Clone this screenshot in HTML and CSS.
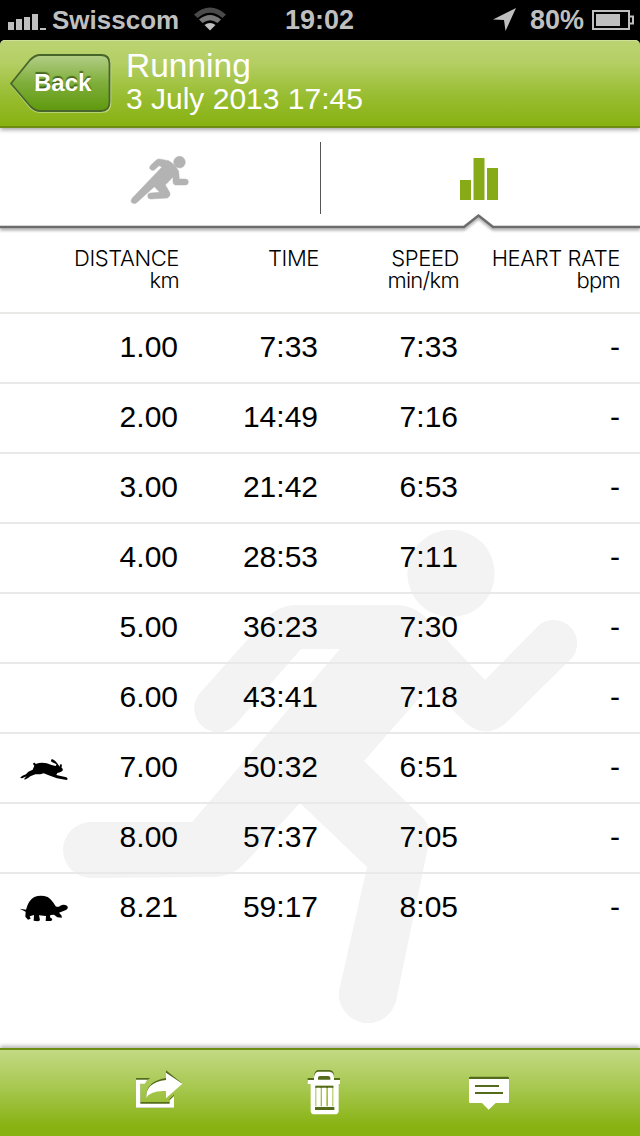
FILE: index.html
```html
<!DOCTYPE html>
<html>
<head>
	<meta charset="utf-8">
	<title>Running</title>
	<link rel="stylesheet" href="styles.css">
</head>
<body>
	<div class="status">
		<svg class="signal" width="40" height="18" viewBox="0 0 40 18">
			<path d="M0 10h6v8H0zM8 7h6v11H8zM16 5h6v13h-6zM24 2h6v16h-6zM32 16h6v2h-6z"/>
		</svg>
		<span class="carrier">Swisscom</span>
		<svg class="wifi" width="32" height="24" viewBox="0 0 32 24">
			<path class="dim" d="M0 7.500Q16-6.500 32 7.500L28.500 11Q16 .5 3.500 11Z"/>
			<path class="mid" d="M5 12.500Q16 3.500 27 12.500L23.500 16Q16 10.500 8.500 16Z"/>
			<path d="M10.500 18Q16 14 21.500 18L16 23.500Z"/>
		</svg>
		<span class="clock">19:02</span>
		<svg class="location" width="24" height="24" viewBox="0 0 24 24">
			<path d="M23 0L12.500 23L11 12L0 11.500Z"/>
		</svg>
		<span class="percent">80%</span>
		<svg class="battery" width="42" height="20" viewBox="0 0 42 20">
			<path class="outline" d="M1 1h36v18H1zM38 6.500h3v7h-3"/>
			<path d="M4 4h24v12H4z"/>
		</svg>
	</div>

	<div class="header_wrap">
		<div class="header">
			<a class="back">
				<svg width="102" height="60" viewBox="0 0 102 60">
					<defs>
						<linearGradient id="back_fill" x1="0" y1="0" x2="0" y2="1">
							<stop offset="0" stop-color="#b3ce87"/>
							<stop offset=".5" stop-color="#7fae3b"/>
							<stop offset="1" stop-color="#5f990d"/>
						</linearGradient>
					</defs>
					<path class="back_glow" d="M1.500 31L20.500 7Q25 2.500 30 2.500H92Q100.500 2.500 100.500 11V49Q100.500 58 92 58H30Q25 58 20.500 54Z"/>
					<path class="back_shape" d="M1 29.500L20 6Q25 1 30 1H91Q99.500 1 99.500 9.500V48Q99.500 57 91 57H30Q25 57 20 52Z"/>
				</svg>
				<span>Back</span>
			</a>
			<div class="heading">
				<h1>Running</h1>
				<p>3 July 2013 17:45</p>
			</div>
		</div>
	</div>

	<div class="tabs">
		<div class="tab">
			<svg class="tab_runner" width="100" height="80" viewBox="0 0 300 240">
				<circle cx="208.500" cy="66.500" r="17.500"/>
				<path d="M148 57L176 62Q193 71 206 93L208 117L226 117A9 9 0 0 1 226 135L196 135Q189 134 189 126L189 111L166 135L180 159Q182 169 172 174L122 177A9 9 0 0 1 122 159L149 157L133 140L80 188Q72 194 64 187Q61 180 67 174L156 81L147 77L133 90Q123 94 119 85Q118 80 123 75L139 60Q143 57 148 57Z"/>
			</svg>
		</div>
		<div class="tab">
			<svg class="tab_chart" width="38" height="44" viewBox="0 0 38 44">
				<path d="M0 22h11v20H0zM13.500 0h11v42h-11zM27 10h11v32H27z"/>
			</svg>
		</div>
		<svg class="tab_line" width="640" height="24" viewBox="0 0 640 24">
			<path d="M-5 14H464L478.500 2.500L493 14H645"/>
		</svg>
	</div>

	<div class="laps">
		<svg class="watermark" width="640" height="820" viewBox="0 228 640 820">
			<circle cx="451" cy="573.500" r="43.700"/>
			<path d="M296 605H396Q414 605 427 619L485 680L539 625A23.500 23.500 0 0 1 572 658L506 723Q485 740 466 723L429 687L364 761L424 819Q431 827 429 842L396 1001A29 29 0 0 1 339 991L367 867L300 803L246 862Q232 877 214 877L91 878A28 28 0 0 1 91 822H192L340 649H301L236 724A23.500 23.500 0 0 1 200 693L265 620Q278 605 296 605Z"/>
		</svg>
		<table>
			<thead>
				<tr>
					<th class="icon"></th>
					<th class="distance"><div>DISTANCE</div><div>km</div></th>
					<th class="time"><div>TIME</div></th>
					<th class="speed"><div>SPEED</div><div>min/km</div></th>
					<th class="heart"><div>HEART RATE</div><div>bpm</div></th>
				</tr>
			</thead>
			<tbody>
				<tr><td></td><td>1.00</td><td>7:33</td><td>7:33</td><td>-</td></tr>
				<tr><td></td><td>2.00</td><td>14:49</td><td>7:16</td><td>-</td></tr>
				<tr><td></td><td>3.00</td><td>21:42</td><td>6:53</td><td>-</td></tr>
				<tr><td></td><td>4.00</td><td>28:53</td><td>7:11</td><td>-</td></tr>
				<tr><td></td><td>5.00</td><td>36:23</td><td>7:30</td><td>-</td></tr>
				<tr><td></td><td>6.00</td><td>43:41</td><td>7:18</td><td>-</td></tr>
				<tr>
					<td>
						<svg width="70" height="40" viewBox="0 0 210 120">
							<path d="M31 93Q31 89 48 82L55 74L68 68L73 56Q68 52 70 48Q75 45 77 51Q94 44 110 49Q126 56 137 57Q141 54 138 51L124 44Q121 36 128 37Q138 42 147 56L149 59Q149 50 154 51Q157 58 154 61Q161 67 157 72Q151 76 142 78L139 84L169 91Q176 96 170 99L141 94L120 86L101 79L91 82L76 82L61 88Q48 98 44 98Q40 96 50 88L36 94Z"/>
						</svg>
					</td>
					<td>7.00</td><td>50:32</td><td>6:51</td><td>-</td>
				</tr>
				<tr><td></td><td>8.00</td><td>57:37</td><td>7:05</td><td>-</td></tr>
				<tr>
					<td>
						<svg width="70" height="45" viewBox="0 0 210 135">
							<path d="M29 68L48 71Q55 43 73 33Q92 26 113 33Q125 40 137 61Q144 65 151 59Q161 53 171 59Q177 66 168 72L147 80L154 88L156 95L142 94L132 86L121 87L120 94L127 99L124 105L107 105L108 90L87 88L90 103L84 106L71 104L72 87L59 91L62 98L54 101L46 92L47 77Z"/>
						</svg>
					</td>
					<td>8.21</td><td>59:17</td><td>8:05</td><td>-</td>
				</tr>
			</tbody>
		</table>
	</div>

	<div class="toolbar">
		<a>
			<svg width="80" height="86" viewBox="0 0 240 258">
				<path class="under" d="M48 84H91L78 92H61V156H149V146L162 134V174H48Z"/>
				<path class="under" d="M138 61L185 99L138 142V122Q94 118 79 142Q76 94 138 84Z"/>
				<path d="M48 89H82L74 101H61V161H149V151L162 138V173H48Z"/>
				<path d="M138 68L187 101L138 145V123Q94 120 79 143Q76 98 138 90Z"/>
			</svg>
		</a>
		<a>
			<svg width="70" height="60" viewBox="0 0 210 180">
				<path class="under" d="M53 54H72V47Q74 30 86 30H118Q132 31 132 47V54H150V67H53Z"/>
				<path d="M53 60H72V52Q74 35 86 35H118Q131 36 132 52V60H150V72H146V152Q146 163 134 163H74Q62 163 62 152V72H53ZM84 59H121V53Q120 48 115 48H90Q84 48 84 53ZM76 77V139H130V77Z" fill-rule="evenodd"/>
				<path class="under" d="M76 77H130V84H76ZM75 141H133V150H75Z"/>
				<path d="M79 83h13v57H79zM96 83h13v57H96zM114 83h13v57h-13z"/>
			</svg>
		</a>
		<a>
			<svg width="70" height="60" viewBox="0 0 210 180">
				<path class="under" d="M42 54Q42 50 46 50H158Q162 50 162 54V66H42Z"/>
				<path d="M42 57H162V125Q162 129 158 129H122L101 149L81 129H46Q42 129 42 125Z"/>
				<path class="under" d="M60 75h72v6H60zM60 96h84v6H60z"/>
			</svg>
		</a>
	</div>
</body>
</html>
```
FILE: styles.css
```css
html,body,div,h1,p,table,thead,tbody,tr,th,td{border:0;margin:0;padding:0}
body { display: flex; flex-direction: column; width: 640px; height: 1136px; overflow: hidden; background: #fff; font-family: "Liberation Sans", Arial, sans-serif; color: #000; }
svg { display: block; }

/* Status bar */

.status { display: flex; align-items: center; height: 40px; background: #000; color: #bfbfbf; font-size: 26px; font-weight: bold; line-height: 40px; }
.status svg { fill: #bfbfbf; flex: none; }
.signal { margin: 2px 4px 0 8px; }
.carrier { width: 127px; }
.wifi { margin: 0 0 2px 15px; }
.wifi .dim { fill: #4a4a4a; }
.wifi .mid { fill: #777; }
.clock { margin-left: 59px; width: 70px; font-size: 27px; }
.location { margin-left: 138px; }
.percent { margin-left: 13px; width: 56px; font-size: 27px; }
.battery { margin-left: 6px; }
.battery .outline { fill: none; stroke: #bfbfbf; stroke-width: 2; }

/* Header */

.header_wrap { position: relative; z-index: 1; background: linear-gradient(#000 10px, transparent 10px); }
.header { display: flex; box-sizing: border-box; height: 88px; padding: 14px 0 0 10px; border-bottom: 2px solid #6c8c12; border-radius: 5px 5px 0 0; background: linear-gradient(#bbd472, #b5cf66 25%, #98bd31 65%, #87b211); box-shadow: inset 0 1px 0 #cfe09b, 0 2px 4px rgba(0,0,0,.35); color: #fff; }
.back { position: relative; width: 100px; height: 60px; }
.back span { position: absolute; left: 24px; top: 15px; font-size: 24px; line-height: 28px; font-weight: bold; text-shadow: 0 -2px 1px rgba(40,70,10,.7); }
.back_shape { fill: url(#back_fill); stroke: #49662a; stroke-width: 1.8; }
.back_glow { fill: none; stroke: #c4da8c; stroke-width: 1.5; }
.heading { margin-left: 16px; }
.heading h1 { font-size: 33.500px; line-height: 34px; margin-top: -5px; font-weight: normal; }
.heading p { font-size: 30px; line-height: 32px; }

/* Tabs */

.tabs { display: flex; position: relative; height: 100px; }
.tab { flex: 1; }
.tab + .tab { background: linear-gradient(#555, #555) 0 14px / 1px 72px no-repeat; }
.tab_runner { margin: 12px 0 0 110px; fill: #b3b3b3; stroke: #b3b3b3; stroke-width: 1.5; }
.tab_chart { margin: 30px 0 0 140px; fill: #86ab17; }
.tab_line { position: absolute; left: 0; top: 85px; fill: none; stroke: #6c6c6c; stroke-width: 2.500; filter: drop-shadow(0 2px 1.5px rgba(0,0,0,.4)); }

/* Laps */

.laps { position: relative; height: 820px; }
.watermark { position: absolute; left: 0; top: 0; fill: #f3f3f3; z-index: -1; }
table { width: 640px; table-layout: fixed; border-spacing: 0; }
th { box-sizing: border-box; height: 86px; padding-top: 19px; border-bottom: 2px solid #e9e9e7; font-family: Inter, "Liberation Sans", sans-serif; font-size: 22px; line-height: 22px; font-weight: 300; letter-spacing: -.4px; vertical-align: top; text-align: right; white-space: nowrap; }
th div + div { letter-spacing: -.7px; }
td { box-sizing: border-box; height: 70px; padding: 0 1px 2px 0; border-bottom: 2px solid #e9e9e9; font-size: 30px; line-height: 34px; font-kerning: none; text-align: right; }
th:last-child { padding-right: 20px; }
td:last-child { padding-right: 20px; }
tbody tr:last-child td { border-bottom: 0; padding-bottom: 4px; }
tbody tr:last-child td:first-child { padding-bottom: 2px; }
td:first-child svg { margin-left: 10px; }
.icon { width: 70px; }
td:first-child { padding-right: 0; }
.distance { width: 109px; }
.time { width: 140px; }
.speed { width: 140px; }
.heart { width: 181px; }

/* Toolbar */

.toolbar { display: grid; grid-template-columns: 165px 165px 165px; position: relative; box-sizing: border-box; height: 88px; padding-left: 76px; border-top: 2px solid #6c8c12; background: linear-gradient(#c3d984, #a6c74e 45%, #87b211 90%); box-shadow: 0 -2px 4px rgba(0,0,0,.3); }
.toolbar svg { fill: #fff; }
.toolbar .under { fill: #556b1c; }
.toolbar a:nth-child(1) svg { margin-left: 44px; }
.toolbar a:nth-child(2) svg { margin: 10px 0 0 49px; }
.toolbar a:nth-child(3) svg { margin: 10px 0 0 49px; }
```
